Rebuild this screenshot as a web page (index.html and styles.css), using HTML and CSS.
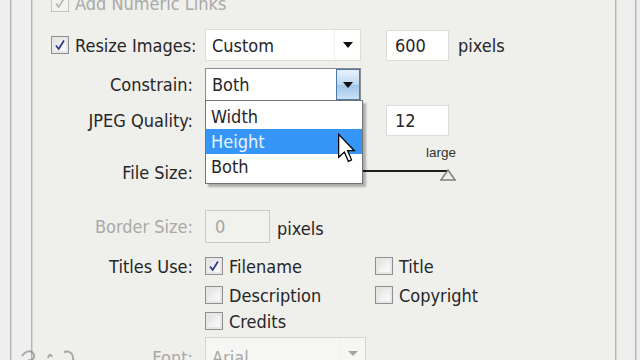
FILE: index.html
```html
<!DOCTYPE html>
<html>
<head>
<meta charset="utf-8">
<link rel="stylesheet" href="styles.css">
</head>
<body>
<div class="frame">
  <div class="strip s1"></div>
  <div class="vline"></div>
  <div class="strip s2"></div>
  <div class="vline"></div>
  <div class="panel">
    <div class="row r-numeric">
      <div class="lead disabled">
        <span class="cb cb-dis checked"><svg viewBox="0 0 18 18"><path d="M4.5 9.5 L7.5 13.5 L13.5 4" /></svg></span>
        <span>Add Numeric Links</span>
      </div>
    </div>

    <div class="row r-resize">
      <div class="lead">
        <span class="cb checked"><svg viewBox="0 0 18 18"><path d="M4.5 9.5 L7.5 13.5 L13.5 4" /></svg></span>
        <span>Resize Images:</span>
      </div>
      <div class="controls">
        <div class="select sel-custom">
          <span class="sel-text">Custom</span>
          <span class="sel-btn"><span class="tri"></span></span>
        </div>
        <div class="input in-num">600</div>
        <span class="unit">pixels</span>
      </div>
    </div>

    <div class="row r-constrain">
      <div class="label">Constrain:</div>
      <div class="controls">
        <div class="select sel-open">
          <span class="sel-text">Both</span>
          <span class="sel-btn btn-hot"><span class="tri"></span></span>
          <ul class="menu">
            <li>Width</li>
            <li class="hl">Height</li>
            <li>Both</li>
          </ul>
          <svg class="cursor" viewBox="0 0 13 21"><path d="M1 1 L1 17 L5 13.3 L7.8 19.8 L10 18.8 L7.3 12.4 L12 12.4 Z"/></svg>
        </div>
      </div>
    </div>

    <div class="row r-jpeg">
      <div class="label">JPEG Quality:</div>
      <div class="controls pad-num">
        <div class="input in-num">12</div>
      </div>
    </div>

    <div class="row r-ticks">
      <div class="label"></div>
      <div class="controls">
        <div class="ticks"><span>large</span></div>
      </div>
    </div>

    <div class="row r-filesize">
      <div class="label">File Size:</div>
      <div class="controls">
        <div class="slider">
          <div class="track"></div>
          <svg class="thumb" viewBox="0 0 16 12"><path d="M8 1 L15 11 L1 11 Z"/></svg>
        </div>
      </div>
    </div>

    <div class="row r-border">
      <div class="label disabled">Border Size:</div>
      <div class="controls">
        <div class="input in-dis">0</div>
        <span class="unit u2">pixels</span>
      </div>
    </div>

    <div class="row r-check r-titles">
      <div class="label">Titles Use:</div>
      <div class="controls">
        <div class="opt o1"><span class="cb checked"><svg viewBox="0 0 18 18"><path d="M4.5 9.5 L7.5 13.5 L13.5 4" /></svg></span><span>Filename</span></div>
        <div class="opt"><span class="cb"></span><span>Title</span></div>
      </div>
    </div>

    <div class="row r-check r-desc">
      <div class="label"></div>
      <div class="controls">
        <div class="opt o1"><span class="cb"></span><span>Description</span></div>
        <div class="opt"><span class="cb"></span><span>Copyright</span></div>
      </div>
    </div>

    <div class="row r-check r-credits">
      <div class="label"></div>
      <div class="controls">
        <div class="opt o1"><span class="cb"></span><span>Credits</span></div>
      </div>
    </div>

    <div class="row r-font">
      <div class="label disabled">Font:</div>
      <div class="controls">
        <div class="select sel-dis">
          <span class="sel-text">Arial</span>
          <span class="sel-btn"><span class="tri"></span></span>
        </div>
      </div>
    </div>
  </div>
  <div class="vline"></div>
  <div class="strip s3"></div>
  <div class="vline"></div>
  <div class="strip s4"></div>
</div>
<svg class="mark" viewBox="0 0 70 20"><path d="M4 14 C8 8 14 8 16 13 C17 17 13 19 10 18"/><path d="M30 16 C31 12 33 12 34 15"/><path d="M46 10 C52 8 56 12 55 19"/></svg>
</body>
</html>
```
FILE: styles.css
```css
html, body {
  margin: 0;
  padding: 0;
}
body {
  width: 640px;
  height: 360px;
  overflow: hidden;
  position: relative;
  background: #eeeeec;
  font-family: "DejaVu Sans Condensed", "Liberation Sans", sans-serif;
  font-size: 18px;
  color: #262628;
}
.frame {
  display: flex;
  height: 360px;
}
.strip { height: 100%; }
.s1 { width: 10px; background: #efefef; }
.s2 { width: 19px; background: #efefef; }
.s3 { width: 18px; background: #eeeeee; }
.s4 { flex: 1; background: #eeeeee; }
.vline {
  width: 1px;
  background: #b4b4b2;
  border-right: 1px solid #d6d6d4;
}
.panel {
  width: 582px;
  background: #efefeb;
  display: flex;
  flex-direction: column;
}
.row {
  display: flex;
  align-items: center;
  gap: 12px;
  flex: none;
}
.label {
  width: 160px;
  flex: none;
  text-align: right;
  white-space: nowrap;
}
.disabled { color: #a9a9a7; }
.lead {
  width: 160px;
  flex: none;
  box-sizing: border-box;
  padding-left: 18px;
  display: flex;
  align-items: center;
  gap: 6px;
  white-space: nowrap;
}
.controls {
  display: flex;
  align-items: center;
}
.cb {
  width: 18px;
  height: 18px;
  box-sizing: border-box;
  flex: none;
  border: 1px solid #8e8f91;
  background: linear-gradient(135deg, #dadada 0%, #f2f2f2 55%, #ffffff 100%);
  box-shadow: inset 0 0 0 2px #e6e6e6;
  display: flex;
}
.cb svg {
  width: 16px;
  height: 16px;
  fill: none;
  stroke: #2b3b86;
  stroke-width: 2;
}
.cb-dis {
  border-color: #c4c4c2;
  background: #f2f2ef;
  box-shadow: none;
}
.cb-dis svg { stroke: #b6b6b6; }

/* rows */
.r-numeric { height: 20px; margin-top: -7px; }
.r-resize { height: 32px; margin-top: 16px; }
.r-constrain { height: 33px; margin-top: 7px; position: relative; z-index: 5; }
.r-jpeg { height: 31px; margin-top: 4px; }
.r-ticks { height: 14px; margin-top: 10px; }
.r-filesize { height: 20px; margin-top: 2px; }
.r-border { height: 33px; margin-top: 28px; }
.r-titles { height: 18px; margin-top: 14px; }
.r-desc { height: 18px; margin-top: 11px; }
.r-credits { height: 18px; margin-top: 8px; }
.r-font { height: 40px; margin-top: 7px; }

/* select */
.select {
  position: relative;
  box-sizing: border-box;
  width: 156px;
  height: 32px;
  background: #ffffff;
  border: 1px solid #dcdcda;
  display: flex;
  align-items: center;
}
.sel-text {
  flex: 1;
  padding-left: 6px;
}
.sel-btn {
  width: 26px;
  height: 100%;
  box-sizing: border-box;
  border-left: 1px solid #f0f0f0;
  display: flex;
  align-items: center;
  justify-content: center;
}
.tri {
  width: 0;
  height: 0;
  border-left: 5px solid transparent;
  border-right: 5px solid transparent;
  border-top: 6px solid #111111;
}
.sel-open {
  height: 33px;
  border: 1px solid #8a8c90;
}
.btn-hot {
  width: 24px;
  border: 1px solid #4b79a8;
  background: linear-gradient(#e9f2fb, #bcd8f2 50%, #9cc4ea 51%, #c9e1f6);
}
.sel-dis {
  width: 161px;
  height: 40px;
  background: #f6f6f4;
  border-color: #d4d4d2;
  color: #a6a6a4;
  align-items: flex-start;
}
.sel-dis .sel-text { padding-top: 9px; }
.sel-dis .sel-btn { height: 30px; }
.sel-dis .tri { border-top-color: #a4a4a4; border-top-width: 5px; }

/* dropdown menu */
.menu {
  position: absolute;
  left: -1px;
  top: 31px;
  width: 158px;
  box-sizing: border-box;
  margin: 0;
  padding: 3px 0 4px;
  list-style: none;
  background: #ffffff;
  border: 1px solid #727272;
  box-shadow: 3px 3px 2px rgba(0, 0, 0, 0.28);
}
.menu li {
  height: 25px;
  line-height: 25px;
  padding-left: 5px;
}
.menu li.hl {
  background: #3596f7;
  color: #eaf4ff;
}
.cursor {
  position: absolute;
  left: 131px;
  top: 64px;
  width: 19px;
  height: 30px;
  fill: #ffffff;
  stroke: #000000;
  stroke-width: 0.9;
}

/* inputs */
.input {
  box-sizing: border-box;
  height: 31px;
  background: #ffffff;
  border: 1px solid #dcdcda;
  display: flex;
  align-items: center;
  padding-left: 8px;
}
.in-num {
  width: 63px;
  margin-left: 25px;
}
.pad-num { padding-left: 156px; }
.unit { margin-left: 9px; }
.in-dis {
  width: 65px;
  height: 33px;
  background: #f1f1ee;
  border-color: #c9c9c7;
  color: #a6a6a4;
  padding-left: 9px;
}
.u2 { margin-left: 7px; margin-top: 4px; }

/* slider */
.ticks {
  width: 251px;
  display: flex;
  justify-content: flex-end;
  font-family: "Liberation Sans", sans-serif;
  font-size: 13.5px;
  color: #333333;
  line-height: 14px;
}
.slider {
  position: relative;
  width: 250px;
  height: 20px;
}
.track {
  margin-top: 8px;
  width: 243px;
  height: 2px;
  background: #1e1e1e;
}
.thumb {
  position: absolute;
  left: 235px;
  top: 7px;
  width: 16px;
  height: 12px;
  fill: #eeeeea;
  stroke: #808080;
  stroke-width: 1.5;
}

/* check options */
.opt {
  display: flex;
  align-items: center;
  gap: 6px;
  white-space: nowrap;
}
.o1 { width: 170px; }

.mark {
  position: absolute;
  left: 18px;
  top: 342px;
  width: 70px;
  height: 20px;
  fill: none;
  stroke: #8a8a8a;
  stroke-width: 2;
  opacity: 0.7;
}
```
